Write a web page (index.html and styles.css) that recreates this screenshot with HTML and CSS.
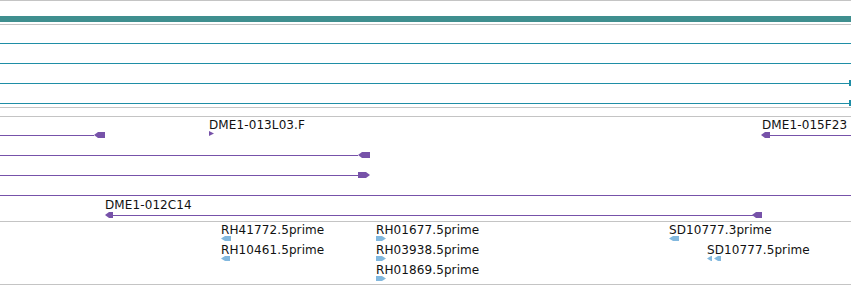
FILE: index.html
```
<!DOCTYPE html>
<html lang="en">
<head>
    <meta charset="UTF-8">
    <title>Track view</title>
    <link rel="stylesheet" href="styles.css">
</head>
<body>
    <div class="browser">
        <div class="track overview">
            <div class="overview-bar"></div>
        </div>

        <div class="track coverage">
            <div class="cov-line"></div>
            <div class="cov-line"></div>
            <div class="cov-line"><span class="cov-end"></span></div>
            <div class="cov-line"><span class="cov-end"></span></div>
        </div>

        <div class="track spacer"></div>

        <div class="track clones">
            <!-- row 1 -->
            <div class="feat-line" style="left:0;top:18px;width:94px"></div>
            <svg class="head" style="left:94px;top:15px" width="11" height="6"><polygon points="0,3 4,0 11,0 11,6 4,6"/></svg>

            <span class="label" style="left:209px;top:1px">DME1-013L03.F</span>
            <svg class="head" style="left:209px;top:14px" width="5" height="5"><polygon points="0,0 5,2.5 0,5"/></svg>

            <span class="label" style="left:762px;top:1px">DME1-015F23</span>
            <svg class="head" style="left:761px;top:15px" width="9" height="6"><polygon points="0,3 4,0 9,0 9,6 4,6"/></svg>
            <div class="feat-line" style="left:770px;top:18px;width:81px"></div>

            <!-- row 2 -->
            <div class="feat-line" style="left:0;top:38px;width:358px"></div>
            <svg class="head" style="left:358px;top:35px" width="12" height="6"><polygon points="0,3 4,0 12,0 12,6 4,6"/></svg>

            <!-- row 3 -->
            <div class="feat-line" style="left:0;top:58px;width:358px"></div>
            <svg class="head" style="left:358px;top:55px" width="12" height="6"><polygon points="0,0 8,0 12,3 8,6 0,6"/></svg>

            <!-- row 4 -->
            <div class="feat-line" style="left:0;top:78px;width:851px"></div>

            <!-- row 5 -->
            <span class="label" style="left:105px;top:81px">DME1-012C14</span>
            <svg class="head" style="left:105px;top:95px" width="8" height="6"><polygon points="0,3 4,0 8,0 8,6 4,6"/></svg>
            <div class="feat-line" style="left:113px;top:98px;width:640px"></div>
            <svg class="head" style="left:752px;top:95px" width="10" height="6"><polygon points="0,3 4,0 10,0 10,6 4,6"/></svg>
        </div>

        <div class="track ests">
            <span class="label" style="left:221px;top:1px">RH41772.5prime</span>
            <svg class="est" style="left:221px;top:14px" width="10" height="5"><polygon points="0,2.5 4,0 10,0 10,5 4,5"/></svg>

            <span class="label" style="left:221px;top:21px">RH10461.5prime</span>
            <svg class="est" style="left:221px;top:34px" width="9" height="5"><polygon points="0,2.5 4,0 9,0 9,5 4,5"/></svg>

            <span class="label" style="left:376px;top:1px">RH01677.5prime</span>
            <svg class="est" style="left:376px;top:14px" width="10" height="5"><polygon points="0,0 6,0 10,2.5 6,5 0,5"/></svg>

            <span class="label" style="left:376px;top:21px">RH03938.5prime</span>
            <svg class="est" style="left:376px;top:34px" width="10" height="5"><polygon points="0,0 6,0 10,2.5 6,5 0,5"/></svg>

            <span class="label" style="left:376px;top:41px">RH01869.5prime</span>
            <svg class="est" style="left:376px;top:54px" width="10" height="5"><polygon points="0,0 6,0 10,2.5 6,5 0,5"/></svg>

            <span class="label" style="left:669px;top:1px">SD10777.3prime</span>
            <svg class="est" style="left:669px;top:14px" width="10" height="5"><polygon points="0,2.5 4,0 10,0 10,5 4,5"/></svg>

            <span class="label" style="left:707px;top:21px">SD10777.5prime</span>
            <svg class="est" style="left:707px;top:34px" width="14" height="5"><polygon points="0,2.5 4,0 5,0 5,5 4,5"/><polygon points="7,2.5 11,0 14,0 14,5 11,5"/></svg>
        </div>
    </div>
</body>
</html>
```

FILE: styles.css
```
body {
    margin: 0;
    background: #fff;
    font-family: "DejaVu Sans", sans-serif;
    overflow: hidden;
}
.browser {
    width: 851px;
}
.track {
    position: relative;
    border-top: 1px solid #c4c4c4;
}
.overview {
    height: 23px;
}
.overview-bar {
    margin-top: 15px;
    height: 6px;
    background: #3f8f8f;
}
.coverage {
    height: 83px;
    box-sizing: border-box;
    padding-top: 18px;
    display: flex;
    flex-direction: column;
    gap: 19px;
}
.cov-line {
    position: relative;
    height: 1px;
    background: #1f8ea6;
}
.cov-end {
    position: absolute;
    right: 0;
    top: -3px;
    width: 2px;
    height: 6px;
    background: #1f8ea6;
}
.spacer {
    height: 8px;
}
.clones {
    height: 104px;
}
.ests {
    height: 62px;
    border-bottom: 1px solid #c4c4c4;
}
.label {
    position: absolute;
    font-size: 12px;
    line-height: 14px;
    letter-spacing: 0.1px;
    color: #111;
    white-space: nowrap;
}
.feat-line {
    position: absolute;
    height: 1px;
    background: #7752a9;
}
.head {
    position: absolute;
    fill: #7752a9;
}
.est {
    position: absolute;
    fill: #82b8de;
}
```
